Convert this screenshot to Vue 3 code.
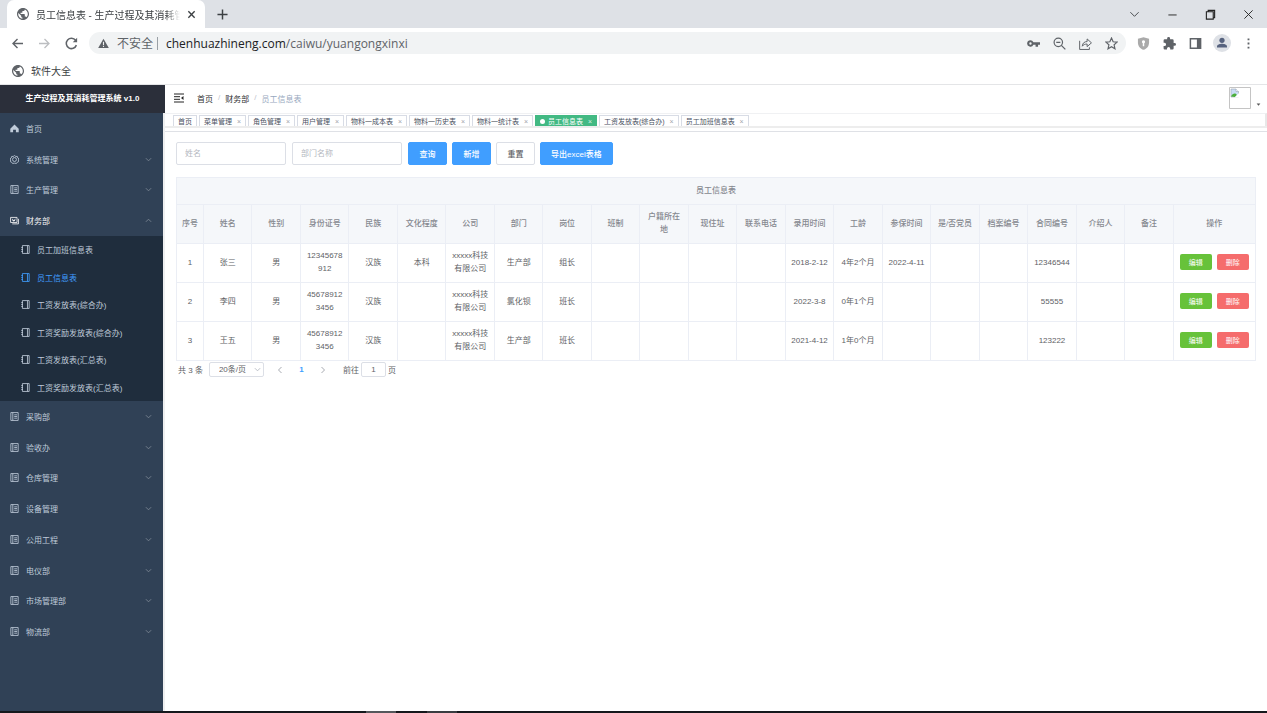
<script setup>
import { ref } from 'vue'

const icons = {
  globe: 'M12 2C6.480 2 2 6.480 2 12s4.480 10 10 10 10-4.480 10-10S17.520 2 12 2zm-1 17.930c-3.950-.490-7-3.850-7-7.930 0-.620.080-1.210.210-1.790L9 15v1c0 1.100.9 2 2 2v1.930zm6.900-2.540c-.260-.810-1-1.390-1.900-1.390h-1v-3c0-.550-.450-1-1-1H8v-2h2c.550 0 1-.450 1-1V7h2c1.100 0 2-.9 2-2v-.410c2.930 1.190 5 4.060 5 7.410 0 2.080-.8 3.970-2.100 5.390z',
  home: 'M8 1 .5 8.500V14.500h5V10h5v4.500h5V8.500z',
  gear: 'M8 .8l2.200 1.800 2.800-.1.700 2.700L16 6.700 14.900 9l.6 2.700-2.500 1.100L11.500 15 8 14.500 4.500 15 3 12.800.5 11.700 1.100 9 0 6.700l2.300-1.500.7-2.700 2.800.1zM11.500 8a3.500 3.500 0 1 1-7 0 3.500 3.500 0 0 1 7 0',
  list: 'M1.500 1h13v14h-13zM5 1v14M7.500 5h5M7.500 8h5M7.500 11h5',
  money: 'M1 2.500h11.500v9H1zM4 14h11V5M4 5l2.700 4.500L9.500 5M4.500 8h4.500',
  book: 'M2.500 1h12v14h-12zM11.500 1v14M.5 4.500h3M.5 8h3M.5 11.500h3'
}

const topMenu = [
  { name: '首页', icon: 'home' },
  { name: '系统管理', icon: 'gear', arrow: true },
  { name: '生产管理', icon: 'list', arrow: true },
  { name: '财务部', icon: 'money', arrow: true, open: true }
]
const subMenu = ['员工加班信息表', '员工信息表', '工资发放表(综合办)', '工资奖励发放表(综合办)', '工资发放表(汇总表)', '工资奖励发放表(汇总表)']
const lowMenu = ['采购部', '验收办', '仓库管理', '设备管理', '公用工程', '电仪部', '市场管理部', '物流部']

const tags = ['首页', '菜单管理', '角色管理', '用户管理', '物料一成本表', '物料一历史表', '物料一统计表', '员工信息表', '工资发放表(综合办)', '员工加班信息表']
const current = '员工信息表'

const columns = ['序号', '姓名', '性别', '身份证号', '民族', '文化程度', '公司', '部门', '岗位', '班制', '户籍所在地', '现住址', '联系电话', '录用时间', '工龄', '参保时间', '是/否党员', '档案编号', '合同编号', '介绍人', '备注', '操作']
const rows = [
  ['1', '张三', '男', '12345678912', '汉族', '本科', 'xxxxx科技有限公司', '生产部', '组长', '', '', '', '', '2018-2-12', '4年2个月', '2022-4-11', '', '', '12346544', '', ''],
  ['2', '李四', '男', '456789123456', '汉族', '', 'xxxxx科技有限公司', '氯化钡', '班长', '', '', '', '', '2022-3-8', '0年1个月', '', '', '', '55555', '', ''],
  ['3', '王五', '男', '456789123456', '汉族', '', 'xxxxx科技有限公司', '生产部', '班长', '', '', '', '', '2021-4-12', '1年0个月', '', '', '', '123222', '', '']
]

const name = ref('')
const dept = ref('')
const page = ref('1')
</script>

<template>
  <div class="window">
    <header class="browser">
      <div class="tabstrip">
        <div class="tab">
          <svg class="globe" viewBox="2 2 20 20"><path :d="icons.globe" /></svg>
          <span class="tab-title">员工信息表 - 生产过程及其消耗管</span>
          <button class="plain" aria-label="关闭标签页"><svg class="i9" viewBox="0 0 10 10"><path d="M1.500 1.500l7 7M8.500 1.500l-7 7" stroke="#3c4043" stroke-width="1.500" /></svg></button>
        </div>
        <button class="plain newtab" aria-label="新标签页"><svg class="i11" viewBox="0 0 12 12"><path d="M6 .5v11M.5 6h11" stroke="#3c4043" stroke-width="1.600" /></svg></button>
        <div class="winbtns">
          <button class="plain" aria-label="搜索标签页"><svg class="i11" viewBox="0 0 12 12"><path d="M1.500 3.500 6 8l4.500-4.500" stroke="#3c4043" fill="none" /></svg></button>
          <button class="plain" aria-label="最小化"><svg class="i11" viewBox="0 0 12 12"><path d="M1.500 6.500h9" stroke="#222" /></svg></button>
          <button class="plain" aria-label="还原"><svg class="i11" viewBox="0 0 12 12"><path d="M1.500 3h7.500v8H1.500zM3.500 3V1.500h7v8H9" stroke="#222" stroke-width="1.200" fill="none" /></svg></button>
          <button class="plain" aria-label="关闭"><svg class="i11" viewBox="0 0 12 12"><path d="M1.500 1.500l9 9M10.500 1.500l-9 9" stroke="#222" /></svg></button>
        </div>
      </div>
      <div class="toolbar">
        <div class="nav">
          <button class="plain" aria-label="后退"><svg class="i13" viewBox="0 0 13 13"><path d="M12 6.500H2M6.500 2 2 6.500 6.500 11" stroke="#5f6368" stroke-width="1.400" fill="none" /></svg></button>
          <button class="plain" aria-label="前进"><svg class="i13" viewBox="0 0 13 13"><path d="M1 6.500h10M6.500 2l4.500 4.500L6.500 11" stroke="#bcbec1" stroke-width="1.300" fill="none" /></svg></button>
          <button class="plain" aria-label="刷新"><svg class="i13" viewBox="0 0 12 12"><path d="M10.500 7.500A4.800 4.800 0 1 1 9.800 3" stroke="#5f6368" stroke-width="1.400" fill="none" /><path d="M11.200.8v4H7.200z" fill="#5f6368" /></svg></button>
        </div>
        <div class="omnibox">
          <svg class="i11" viewBox="0 0 12 12"><path d="M6 .8 11.800 11H.2z" fill="#5f6368" /><path d="M6 4v3.500M6 8.500v1.300" stroke="#f1f3f4" stroke-width="1.200" /></svg>
          <span class="unsafe">不安全</span>
          <span class="bar"></span>
          <span class="url">chenhuazhineng.com<span class="path">/caiwu/yuangongxinxi</span></span>
          <div class="omni-icons">
            <button class="plain" aria-label="密码"><svg class="i13" viewBox="0 0 12 12"><path fill="#5f6368" fill-rule="evenodd" d="M3.200 3a3 3 0 1 0 2.700 4.200h2V9h2.300V7.200H12V4.800H5.900A3 3 0 0 0 3.200 3zm0 1.900a1.100 1.100 0 1 1 0 2.200 1.100 1.100 0 0 1 0-2.200z" /></svg></button>
            <button class="plain" aria-label="缩放"><svg class="i13" viewBox="0 0 12 12"><circle cx="4.900" cy="4.900" r="3.900" fill="none" stroke="#5f6368" stroke-width="1.100" /><path d="M3 4.900h3.800M7.700 7.700l3.700 3.700" stroke="#5f6368" stroke-width="1.200" /></svg></button>
            <button class="plain" aria-label="分享"><svg class="i13" viewBox="0 0 12 12"><path d="M.6 3.500v8h9V9.500M3 8.500c.3-3 2-4.200 4.500-4.300V1.800l4 3.600-4 3.500V6.500C5.500 6.500 4 7 3 8.500z" stroke="#5f6368" stroke-width=".9" fill="none" /></svg></button>
            <button class="plain" aria-label="收藏"><svg class="i13" viewBox="0 0 12 12"><path d="M6 1l1.500 3.400 3.700.3-2.800 2.500.8 3.700L6 9l-3.200 1.900.8-3.700L.8 4.700l3.700-.3z" stroke="#5f6368" stroke-width="1.100" fill="none" /></svg></button>
          </div>
        </div>
        <div class="ext">
          <button class="plain" aria-label="安全扩展"><svg class="i13" viewBox="0 0 14 14"><path d="M1 1.800 7 .3l6 1.500v4c0 4-2.500 6.700-6 8-3.500-1.300-6-4-6-8z" fill="#aaa" /><path d="M7 3.500a1.700 1.700 0 0 1 .8 3.200V10H6.200V6.700A1.700 1.700 0 0 1 7 3.500z" fill="#fff" /></svg></button>
          <button class="plain" aria-label="扩展程序"><svg class="i13" viewBox="1 1 22 22"><path fill="#5f6368" d="M20.500 11H19V7a2 2 0 0 0-2-2h-4V3.500a2.500 2.500 0 0 0-5 0V5H4a2 2 0 0 0-2 2v3.800h1.500a2.700 2.700 0 0 1 0 5.400H2V20a2 2 0 0 0 2 2h3.800v-1.500a2.700 2.700 0 0 1 5.400 0V22H17a2 2 0 0 0 2-2v-4h1.500a2.500 2.500 0 0 0 0-5z" /></svg></button>
          <button class="plain" aria-label="侧边栏"><svg class="i13" viewBox="0 0 14 14"><path d="M1.500 1.800h11v10.400h-11z" stroke="#5f6368" stroke-width="1.600" fill="none" /><path d="M8.500 2h4v10h-4z" fill="#5f6368" /></svg></button>
          <button class="plain profile" aria-label="用户"><svg class="i18" viewBox="0 0 18 18"><circle cx="9" cy="9" r="9" fill="#dee1e6" /><circle cx="9" cy="6.300" r="2.600" fill="#56627e" /><path d="M4 13.500v-1c0-2 3-2.800 5-2.800s5 .8 5 2.800v1z" fill="#56627e" /></svg></button>
          <button class="plain" aria-label="菜单"><svg class="i13" viewBox="0 0 14 14"><path d="M6 1.500h2v2H6zM6 6h2v2H6zM6 10.500h2v2H6z" fill="#5f6368" /></svg></button>
        </div>
      </div>
      <nav class="bookmarks">
        <svg class="globe" viewBox="2 2 20 20"><path :d="icons.globe" /></svg>
        <a href="#">软件大全</a>
      </nav>
    </header>

    <div class="app">
      <aside class="side">
        <h1 class="logo">生产过程及其消耗管理系统 v1.0</h1>
        <nav class="menu">
          <div class="group first">
            <a v-for="m in topMenu" :key="m.name" href="#" class="item" :class="{ open: m.open }">
              <svg class="mi" :class="{ solid: m.icon === 'home' }" viewBox="0 0 16 16"><path :d="icons[m.icon]" /></svg>
              <span>{{ m.name }}</span>
              <svg v-if="m.arrow" class="arrow" :class="{ up: m.open }" viewBox="0 0 8 8"><path d="M1 2.500 4 5.500l3-3" /></svg>
            </a>
          </div>
          <div class="group sub">
            <a v-for="s in subMenu" :key="s" href="#" class="item" :class="{ active: s === current }">
              <svg class="mi" viewBox="0 0 16 16"><path :d="icons.book" /></svg>
              <span>{{ s }}</span>
            </a>
          </div>
          <div class="group last">
            <a v-for="m in lowMenu" :key="m" href="#" class="item">
              <svg class="mi" viewBox="0 0 16 16"><path :d="icons.list" /></svg>
              <span>{{ m }}</span>
              <svg class="arrow" viewBox="0 0 8 8"><path d="M1 2.500 4 5.500l3-3" /></svg>
            </a>
          </div>
        </nav>
      </aside>

      <div class="content">
        <div class="navbar">
          <button class="plain" aria-label="折叠菜单"><svg class="i10" viewBox="0 0 10 10"><path d="M0 1h10M0 3.700h6M0 6.300h6M0 9h10" stroke="#222" /><path d="M9.500 3v4L7 5z" fill="#222" /></svg></button>
          <nav class="crumbs">
            <a href="#">首页</a><i>/</i><a href="#">财务部</a><i>/</i><span>员工信息表</span>
          </nav>
          <button class="plain user" aria-label="用户菜单">
            <svg class="avatar" viewBox="0 0 22 22"><path d="M.5.5h21v21H.5z" fill="#fff" stroke="#c4c4c4" /><path d="M2 2h5l2.500 2.500V10H2z" fill="#c9dcf5" stroke="#9aa4b2" stroke-width=".6" /><path d="M2 9.500c1-2.500 3.500-3.500 5-2.500l1 1-2 2z" fill="#4caf3a" /><path d="M7 2v2.500h2.500" fill="#fff" stroke="#9aa4b2" stroke-width=".6" /><path d="M10 6 5.500 10.500H10z" fill="#fff" /></svg>
            <svg class="caret" viewBox="0 0 6 4"><path d="M.5.5h5L3 3.500z" fill="#555" /></svg>
          </button>
        </div>
        <div class="tags">
          <a v-for="t in tags" :key="t" href="#" class="tag" :class="{ active: t === current }">
            <span v-if="t === current" class="dot"></span>{{ t }}<span v-if="t !== '首页'" class="x">×</span>
          </a>
        </div>
        <div class="tagline"></div>

        <main>
          <form class="filters" @submit.prevent>
            <input v-model="name" type="text" placeholder="姓名" aria-label="姓名">
            <input v-model="dept" type="text" placeholder="部门名称" aria-label="部门名称">
            <div class="actions">
              <button class="btn primary">查询</button>
              <button class="btn primary" type="button">新增</button>
              <button class="btn" type="reset">重置</button>
              <button class="btn primary" type="button">导出excel表格</button>
            </div>
          </form>

          <table>
            <colgroup>
              <col class="c-no"><col v-for="n in 20" :key="n"><col class="c-op">
            </colgroup>
            <thead>
              <tr class="caption"><th colspan="22">员工信息表</th></tr>
              <tr><th v-for="c in columns" :key="c">{{ c }}</th></tr>
            </thead>
            <tbody>
              <tr v-for="r in rows" :key="r[0]">
                <td v-for="(v, i) in r" :key="i">{{ v }}</td>
                <td>
                  <div class="ops">
                    <button class="mini edit">编辑</button>
                    <button class="mini del">删除</button>
                  </div>
                </td>
              </tr>
            </tbody>
          </table>

          <div class="pager">
            <span>共 3 条</span>
            <div class="size">
              <select aria-label="每页条数"><option>20条/页</option></select>
              <svg class="arrow" viewBox="0 0 8 8"><path d="M1 2.500 4 5.500l3-3" /></svg>
            </div>
            <div class="pages">
              <button class="plain" aria-label="上一页"><svg class="i8" viewBox="0 0 8 8"><path d="M5.500 1 2.500 4l3 3" stroke="#a8abb2" fill="none" /></svg></button>
              <button class="plain cur">1</button>
              <button class="plain" aria-label="下一页"><svg class="i8" viewBox="0 0 8 8"><path d="M2.500 1l3 3-3 3" stroke="#a8abb2" fill="none" /></svg></button>
            </div>
            <label class="jump">前往<input v-model="page" type="text">页</label>
          </div>
        </main>
      </div>
    </div>
    <footer class="taskbar"></footer>
  </div>
</template>

<style>
body { margin: 0; background: #fff; }
</style>

<style scoped>
* { box-sizing: border-box; }
.window {
  min-height: 100vh;
  display: flex;
  flex-direction: column;
  font-family: "Liberation Sans", "Noto Sans CJK SC", sans-serif;
  font-size: 8px;
  color: #606266;
}
a { color: inherit; text-decoration: none; }
button, input, select { font: inherit; margin: 0; }
svg { display: block; flex: none; }
.plain { border: 0; padding: 0; background: none; color: inherit; display: flex; align-items: center; justify-content: center; }
.i8 { width: 8px; height: 8px; }
.i9 { width: 9px; height: 9px; }
.i10 { width: 10px; height: 10px; }
.i11 { width: 11px; height: 11px; }
.i13 { width: 13px; height: 13px; }
.i18 { width: 18px; height: 18px; }
.globe { width: 12px; height: 12px; fill: #5f6368; }

.browser { font-family: "Open Sans", "Noto Sans CJK SC", sans-serif; font-size: 10px; color: #3c4043; border-bottom: 1px solid #e4e5e7; }
.tabstrip { height: 28px; background: #dee1e6; display: flex; align-items: center; padding-left: 7px; }
.tab { width: 198px; height: 28px; background: #fff; border-radius: 7px 7px 0 0; display: flex; align-items: center; gap: 7px; padding: 0 9px 0 10px; }
.tab-title { flex: 1; white-space: nowrap; overflow: hidden; mask-image: linear-gradient(90deg, #000 90%, transparent); }
.newtab { margin-left: 12px; }
.winbtns { margin-left: auto; display: flex; gap: 27px; padding-right: 13px; }
.toolbar { height: 30px; display: flex; align-items: center; padding-left: 11px; }
.nav { display: flex; gap: 14px; width: 78px; }
.omnibox { flex: 1; height: 22px; border-radius: 11px; background: #f1f3f4; display: flex; align-items: center; padding: 0 8px 0 9px; font-size: 12px; }
.unsafe { margin-left: 8px; color: #5f6368; }
.bar { width: 1px; height: 13px; background: #9aa0a6; margin: 0 8px 0 4px; }
.url { color: #202124; }
.path { color: #5f6368; }
.omni-icons { margin-left: auto; display: flex; gap: 13px; }
.ext { display: flex; align-items: center; gap: 13px; padding: 0 12px 0 11px; }
.profile { width: 14px; }
.bookmarks { height: 26px; display: flex; align-items: center; gap: 7px; padding-left: 12px; }
.bookmarks a { line-height: 16px; }

.app { flex: 1; display: flex; }
.side { width: 165px; background: linear-gradient(90deg, #304156 163px, #eeeff0 163px); }
.logo { margin: 0; height: 28px; line-height: 28px; background: #2b2f3a; color: #fff; font-size: 8px; font-weight: 700; text-align: center; white-space: nowrap; }
.menu { width: 163px; color: #bfcbd9; }
.group { display: grid; grid-auto-rows: 1fr; }
.first { min-height: 123px; }
.last { min-height: 246px; }
.sub { min-height: 165px; background: #1f2d3d; }
.item { display: flex; align-items: center; gap: 7px; padding: 0 11px 0 10px; }
.sub .item { padding-left: 21px; }
.item.open { color: #f4f4f5; }
.item.active { color: #409eff; }
.mi { width: 9px; height: 9px; fill: none; stroke: currentColor; stroke-width: 1.500; }
.mi.solid { fill: currentColor; stroke: none; }
.arrow { width: 7px; height: 7px; margin-left: auto; fill: none; stroke: #7c8794; }
.arrow.up { transform: rotate(180deg); }

.content { flex: 1; min-width: 0; }
.navbar { height: 28px; display: flex; align-items: center; padding: 0 6px 2px 9px; color: #303133; }
.crumbs { display: flex; gap: 5px; margin-left: 13px; }
.crumbs i { color: #c0c4cc; font-style: normal; }
.crumbs span { color: #97a8be; }
.user { margin-left: auto; gap: 5px; align-items: flex-end; }
.avatar { width: 22px; height: 22px; }
.caret { width: 5px; height: 3px; margin-bottom: 3px; }
.tags { height: 13px; overflow: hidden; display: flex; gap: 2px; padding: 1px 0 0 8px; border-top: 1px solid #f0f1f3; border-right: 2px solid #e8e8e8; font-size: 7px; color: #495060; }
.tag { height: 13px; line-height: 11px; border: 1px solid #d8dce5; padding: 0 4px; display: flex; align-items: center; white-space: nowrap; flex: none; }
.x { width: 9px; text-align: right; color: #a0a4ab; }
.tag.active { background: #42b983; border-color: #42b983; color: #fff; }
.tag.active .x { color: #d5f0e3; }
.dot { width: 5px; height: 5px; border-radius: 50%; background: #fff; margin-right: 3px; }
.tagline { height: 6px; border-top: 2px solid #ededed; border-bottom: 1px solid #dfe1e6; }

main { padding: 10px 11px; }
.filters { display: flex; gap: 6px; }
.filters input { width: 110px; height: 23px; border: 1px solid #dcdfe6; border-radius: 2px; padding: 0 8px; color: #606266; outline: 0; }
input::placeholder { color: #b4b8c0; }
.actions { display: flex; gap: 5px; }
.btn { min-width: 39px; height: 23px; padding: 0 10px 1px; border: 1px solid #dcdfe6; border-radius: 2px; background: #fff; color: #606266; font-weight: 500; white-space: nowrap; }
.btn.primary { background: #409eff; border-color: #409eff; color: #fff; }

table { width: 100%; margin-top: 12px; table-layout: fixed; border-collapse: collapse; text-align: center; line-height: 13px; }
th, td { border: 1px solid #ebeef5; padding: 5px 5px 7px; height: 39px; word-break: break-all; font-weight: 400; }
th { background: #f5f7fa; color: #85888f; font-weight: 500; }
.caption th { height: 27px; }
tr > :first-child, tr > :last-child { padding-left: 2px; padding-right: 2px; }
.c-no { width: 27px; }
.c-op { width: 82px; }
.ops { display: flex; justify-content: center; gap: 5px; }
.mini { width: 32px; height: 16px; padding: 0; border: 0; border-radius: 2px; color: #fff; font-size: 7px; }
.edit { background: #67c23a; }
.del { background: #f56c6c; }

.pager { display: flex; align-items: center; height: 17px; padding-left: 2px; }
.size { position: relative; width: 55px; margin-left: 6px; }
.size select { width: 100%; height: 15px; appearance: none; border: 1px solid #dcdfe6; border-radius: 2px; background: #fff; color: #606266; padding: 0 9px; display: block; }
.size .arrow { position: absolute; right: 3px; top: 4px; stroke: #b4b8c0; }
.pages { display: flex; gap: 13px; margin-left: 12px; }
.cur { width: 9px; color: #409eff; font-weight: 700; }
.jump { display: flex; align-items: center; gap: 2px; margin-left: 16px; }
.jump input { width: 25px; height: 15px; border: 1px solid #dcdfe6; border-radius: 2px; padding: 0; text-align: center; color: #606266; }

.taskbar { height: 2px; background: linear-gradient(90deg, #15181c 366px, #55585c 366px 396px, #15181c 396px 427px, #3a3d41 427px 457px, #15181c 457px); }
</style>
